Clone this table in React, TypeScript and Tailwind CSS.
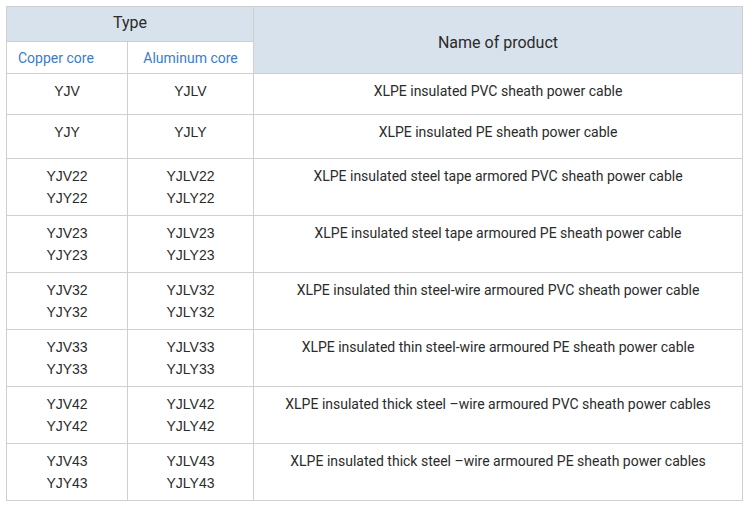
const rows: { cu: string[]; al: string[]; name: string; h: string }[] = [
  { cu: ["YJV"], al: ["YJLV"], name: "XLPE insulated PVC sheath power cable", h: "h-[41px]" },
  { cu: ["YJY"], al: ["YJLY"], name: "XLPE insulated PE sheath power cable", h: "h-[44px]" },
  { cu: ["YJV22", "YJY22"], al: ["YJLV22", "YJLY22"], name: "XLPE insulated steel tape armored PVC sheath power cable", h: "h-[57px]" },
  { cu: ["YJV23", "YJY23"], al: ["YJLV23", "YJLY23"], name: "XLPE insulated steel tape armoured PE sheath power cable", h: "h-[57px]" },
  { cu: ["YJV32", "YJY32"], al: ["YJLV32", "YJLY32"], name: "XLPE insulated thin steel-wire armoured PVC sheath power cable", h: "h-[57px]" },
  { cu: ["YJV33", "YJY33"], al: ["YJLV33", "YJLY33"], name: "XLPE insulated thin steel-wire armoured PE sheath power cable", h: "h-[57px]" },
  { cu: ["YJV42", "YJY42"], al: ["YJLV42", "YJLY42"], name: "XLPE insulated thick steel –wire armoured PVC sheath power cables", h: "h-[57px]" },
  { cu: ["YJV43", "YJY43"], al: ["YJLV43", "YJLY43"], name: "XLPE insulated thick steel –wire armoured PE sheath power cables", h: "h-[57px]" },
];

export default function App() {
  return (
    <div className="min-h-[509px] bg-white pl-[6px] pt-[6px] font-['Roboto',sans-serif] text-[#2b2b2b]">
      <table className="w-[737px] table-fixed border-collapse border border-[#cfcfcf]">
        <colgroup>
          <col className="w-[121px]" />
          <col className="w-[126px]" />
          <col />
        </colgroup>
        <thead>
          <tr className="h-[35px]">
            <th colSpan={2} className="border border-[#cfcfcf] bg-[#d8e2ec] pb-[2px] text-[16px] font-normal text-[#2b2b2b]">
              Type
            </th>
            <th rowSpan={2} className="border border-[#cfcfcf] bg-[#d8e2ec] pt-[6px] text-[16px] font-normal text-[#2b2b2b]">
              Name of product
            </th>
          </tr>
          <tr className="h-[32px]">
            <th className="border border-[#cfcfcf] pl-[11px] pt-[2px] text-left text-[14px] font-normal text-[#3d7cc6]">Copper core</th>
            <th className="border border-[#cfcfcf] pt-[2px] text-[14px] font-normal text-[#3d7cc6]">Aluminum core</th>
          </tr>
        </thead>
        <tbody>
          {rows.map((r) => (
            <tr key={r.cu[0]} className={r.h}>
              <td className="border border-[#cfcfcf] pt-[6px] text-center align-top font-['Liberation_Sans',sans-serif] text-[14px] leading-[22px]">
                {r.cu.map((c) => (
                  <div key={c}>{c}</div>
                ))}
              </td>
              <td className="border border-[#cfcfcf] pt-[6px] text-center align-top font-['Liberation_Sans',sans-serif] text-[14px] leading-[22px]">
                {r.al.map((c) => (
                  <div key={c}>{c}</div>
                ))}
              </td>
              <td className="border border-[#cfcfcf] pt-[6px] text-center align-top text-[14px] leading-[22px]">
                {r.name}
              </td>
            </tr>
          ))}
        </tbody>
      </table>
    </div>
  );
}
